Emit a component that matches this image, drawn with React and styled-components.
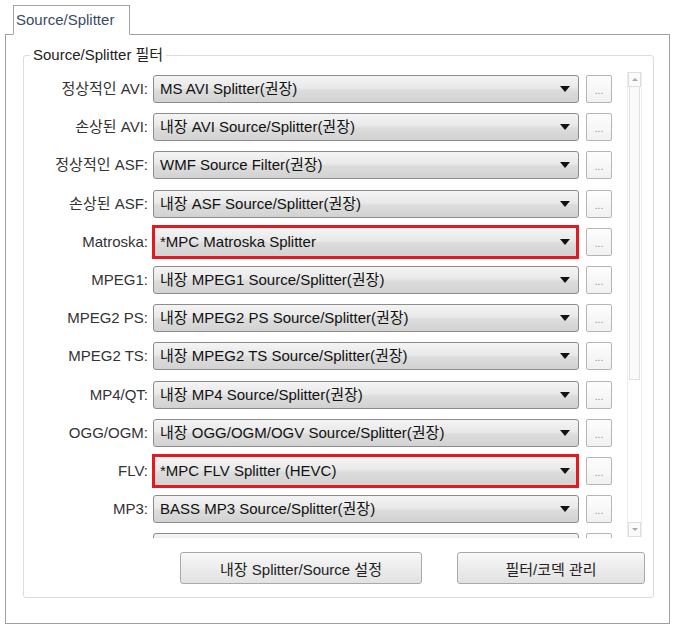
import React from "react";
import styled, { createGlobalStyle } from "styled-components";

const GlobalStyle = createGlobalStyle`
  html, body {
    margin: 0;
    background: #fff;
  }
  body {
    font-family: "Liberation Sans", "Noto Sans CJK KR", sans-serif;
    font-size: 15px;
    color: #222;
  }
`;

const Page = styled.div`
  padding: 5px 6px 9px 5px;
  width: 665px;
`;

const TabStrip = styled.div`
  display: flex;
  padding-left: 8px;
  margin-bottom: -1px;
  position: relative;
  z-index: 1;
`;

const Tab = styled.div`
  width: 113px;
  height: 28px;
  border: 1px solid #a3a3a3;
  border-bottom: 1px solid #fff;
  background: #fff;
  color: #3a4a66;
  font-size: 15px;
  line-height: 28px;
  padding-left: 2px;
`;

const Panel = styled.div`
  box-sizing: border-box;
  height: 590px;
  border: 1px solid #a0a0a0;
  background: #fff;
  padding: 11px 15px 0 17px;
`;

const Group = styled.fieldset`
  margin: 0;
  padding: 8px 0 11px 0;
  border: 1px solid #dcdcdc;
  border-radius: 3px;
  height: 552px;
  box-sizing: border-box;
`;

const Legend = styled.legend`
  margin-left: 6px;
  padding: 0 3px;
  font-size: 15px;
  line-height: 18px;
  color: #222;
`;

const ListArea = styled.div`
  display: flex;
  height: 466px;
  padding-right: 11px;
`;

const Viewport = styled.div`
  flex: 1;
  height: 100%;
  overflow: hidden;
`;

const Rows = styled.div`
  display: flex;
  flex-direction: column;
  gap: 10.2px;
  padding-top: 3px;
`;

const Row = styled.div`
  display: grid;
  grid-template-columns: 124px 426px 26px;
  column-gap: 5px;
  align-items: center;
  height: 28px;
  & > :last-child {
    margin-left: 2px;
  }
`;

const Label = styled.div`
  text-align: right;
  color: #333;
  font-size: 15px;
  white-space: nowrap;
  line-height: 18px;
`;

const Combo = styled.div`
  display: flex;
  align-items: center;
  justify-content: space-between;
  box-sizing: border-box;
  height: ${(p) => (p.$highlight ? "34px" : "28px")};
  margin: ${(p) => (p.$highlight ? "-3px 0 -3px -1px" : "0")};
  border: ${(p) => (p.$highlight ? "3px solid #e2191e" : "1px solid #8c8c8c")};
  border-radius: ${(p) => (p.$highlight ? "0" : "3px")};
  background: linear-gradient(#f4f4f4, #e9e9e9 45%, #dcdcdc 55%, #d2d2d2);
  padding: 0 ${(p) => (p.$highlight ? "2px" : "4px")} 0 ${(p) => (p.$highlight ? "5px" : "6px")};
  color: #111;
  font-size: 15px;
  line-height: 18px;
  white-space: nowrap;
`;

const Arrow = styled.span`
  width: 0;
  height: 0;
  margin-right: 4px;
  border-left: 5px solid transparent;
  border-right: 5px solid transparent;
  border-top: 6px solid #111;
`;

const DotsButton = styled.div`
  box-sizing: border-box;
  height: 28px;
  width: 26px;
  border: 1px solid #b5b5b5;
  border-radius: 2px;
  background: linear-gradient(#fdfdfd, #f1f1f1);
  color: #8a8a8a;
  font-size: 10px;
  line-height: 10px;
  display: flex;
  align-items: flex-end;
  justify-content: center;
  padding-bottom: 6px;
`;

const ScrollBar = styled.div`
  width: 15px;
  margin-left: 15px;
  height: 465px;
  display: flex;
  flex-direction: column;
  border-left: 1px solid #ececec;
  border-right: 1px solid #ececec;
  box-sizing: border-box;
`;

const ScrollArrow = styled.div`
  height: 15px;
  box-sizing: border-box;
  border: 1px solid #dedede;
  background: #fafafa;
  display: flex;
  align-items: center;
  justify-content: center;
`;

const Tri = styled.span`
  width: 0;
  height: 0;
  border-left: 3px solid transparent;
  border-right: 3px solid transparent;
  ${(p) => (p.$up ? "border-bottom: 3px solid #a8a8a8;" : "border-top: 3px solid #a8a8a8;")}
`;

const Track = styled.div`
  flex: 1;
  display: flex;
  flex-direction: column;
`;

const Thumb = styled.div`
  height: 292px;
  margin: 0 1px;
  border: 1px solid #e0e0e0;
  border-top: none;
  background: #fafafa;
`;

const Footer = styled.div`
  display: flex;
  justify-content: flex-end;
  gap: 35px;
  margin-top: 14px;
  padding-right: 8px;
`;

const PushButton = styled.button`
  width: ${(p) => p.$width}px;
  height: 32px;
  border: 1px solid #a9a9a9;
  border-radius: 3px;
  background: linear-gradient(#f8f8f8, #ececec 50%, #e2e2e2);
  font-family: "Liberation Sans", "Noto Sans CJK KR", sans-serif;
  font-size: 15px;
  color: #222;
  padding: 0;
`;

const rows = [
  { label: "정상적인 AVI:", value: "MS AVI Splitter(권장)" },
  { label: "손상된 AVI:", value: "내장 AVI Source/Splitter(권장)" },
  { label: "정상적인 ASF:", value: "WMF Source Filter(권장)" },
  { label: "손상된 ASF:", value: "내장 ASF Source/Splitter(권장)" },
  { label: "Matroska:", value: "*MPC Matroska Splitter", highlight: true },
  { label: "MPEG1:", value: "내장 MPEG1 Source/Splitter(권장)" },
  { label: "MPEG2 PS:", value: "내장 MPEG2 PS Source/Splitter(권장)" },
  { label: "MPEG2 TS:", value: "내장 MPEG2 TS Source/Splitter(권장)" },
  { label: "MP4/QT:", value: "내장 MP4 Source/Splitter(권장)" },
  { label: "OGG/OGM:", value: "내장 OGG/OGM/OGV Source/Splitter(권장)" },
  { label: "FLV:", value: "*MPC FLV Splitter (HEVC)", highlight: true },
  { label: "MP3:", value: "BASS MP3 Source/Splitter(권장)" },
  // next row is scrolled out of view; only its top edge shows
  { label: "", value: "", hidden: true },
];

export default function App() {
  return (
    <>
      <GlobalStyle />
      <Page>
        <TabStrip>
          <Tab>Source/Splitter</Tab>
        </TabStrip>
        <Panel>
          <Group>
            <Legend>Source/Splitter 필터</Legend>
            <ListArea>
              <Viewport>
                <Rows>
                  {rows.map((r, i) => (
                    <Row key={i}>
                      <Label>{r.label}</Label>
                      <Combo $highlight={r.highlight}>
                        <span>{r.value}</span>
                        {!r.hidden && <Arrow />}
                      </Combo>
                      <DotsButton>{r.hidden ? "" : "..."}</DotsButton>
                    </Row>
                  ))}
                </Rows>
              </Viewport>
              <ScrollBar>
                <ScrollArrow>
                  <Tri $up />
                </ScrollArrow>
                <Track>
                  <Thumb />
                </Track>
                <ScrollArrow>
                  <Tri />
                </ScrollArrow>
              </ScrollBar>
            </ListArea>
            <Footer>
              <PushButton $width={242}>내장 Splitter/Source 설정</PushButton>
              <PushButton $width={188}>필터/코덱 관리</PushButton>
            </Footer>
          </Group>
        </Panel>
      </Page>
    </>
  );
}
